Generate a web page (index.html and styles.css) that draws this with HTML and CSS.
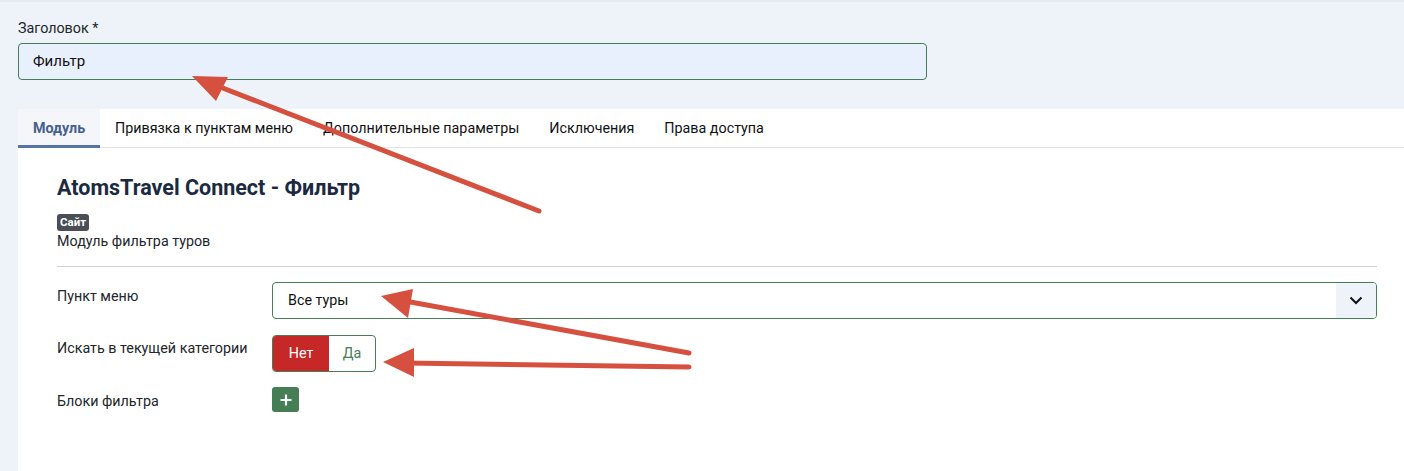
FILE: index.html
```html
<!DOCTYPE html>
<html lang="ru">
<head>
<meta charset="UTF-8">
<meta name="viewport" content="width=device-width, initial-scale=1.0">
<title>Модуль: Фильтр</title>
<link rel="stylesheet" href="styles.css">
</head>
<body>

<div class="page">
  <div class="title-field">
    <label for="title">Заголовок *</label>
    <div class="title-input" id="title">Фильтр</div>
  </div>

  <div class="card">
    <ul class="tabs">
      <li class="tab active">Модуль</li>
      <li class="tab">Привязка к пунктам меню</li>
      <li class="tab">Дополнительные параметры</li>
      <li class="tab">Исключения</li>
      <li class="tab">Права доступа</li>
    </ul>

    <div class="tab-body">
      <h2 class="module-title">AtomsTravel Connect - Фильтр</h2>
      <span class="badge">Сайт</span>
      <p class="module-desc">Модуль фильтра туров</p>
      <hr class="divider">

      <div class="row">
        <div class="row-label">Пункт меню</div>
        <div class="select">
          <span class="select-value">Все туры</span>
          <span class="select-caret">
            <svg width="14" height="9" viewBox="0 0 14 9"><path d="M1.5 1.5 L7 7 L12.5 1.5" fill="none" stroke="#111" stroke-width="2"/></svg>
          </span>
        </div>
      </div>

      <div class="row">
        <div class="row-label">Искать в текущей категории</div>
        <div class="switcher">
          <span class="switch-opt on">Нет</span>
          <span class="switch-opt">Да</span>
        </div>
      </div>

      <div class="row row-center">
        <div class="row-label">Блоки фильтра</div>
        <button class="add-btn" type="button">
          <svg width="12" height="12" viewBox="0 0 12 12"><path d="M6 0.5 V11.5 M0.5 6 H11.5" stroke="#fff" stroke-width="2.2"/></svg>
        </button>
      </div>
    </div>
  </div>
</div>

<!-- annotation arrows drawn over the screenshot -->
<svg class="arrows" width="1404" height="471" viewBox="0 0 1404 471">
  <g fill="#d5503f" stroke="#d5503f" stroke-linecap="round">
    <line x1="539" y1="211" x2="215" y2="85" stroke-width="5"/>
    <polygon points="192,76 228,77 216,101" stroke="none"/>
    <line x1="689" y1="353" x2="405" y2="301" stroke-width="5"/>
    <polygon points="381,296 413,289 408,318" stroke="none"/>
    <line x1="689" y1="367" x2="405" y2="363" stroke-width="5"/>
    <polygon points="383,362 414,348 414,377" stroke="none"/>
  </g>
</svg>

</body>
</html>
```

FILE: styles.css
```css
body {
  margin: 0;
  font-family: Roboto, "Liberation Sans", sans-serif;
  font-size: 14.3px;
  color: #22262a;
  background: #eef3fa;
  border-top: 2px solid #e6ebf2;
  overflow: hidden;
}

.page {
  padding: 16px 0 0 18px;
  height: 469px;
  box-sizing: border-box;
  display: flex;
  flex-direction: column;
}

.title-field label {
  display: block;
  line-height: 20px;
  margin-bottom: 5px;
}

.title-input {
  width: 909px;
  height: 37px;
  box-sizing: border-box;
  border: 1px solid #457d54;
  border-radius: 4px;
  background: #e8f0fd;
  padding: 0 14px;
  line-height: 35px;
  font-size: 15px;
  color: #111;
}

.card {
  margin-top: 29px;
  background: #fff;
  flex: 1;
}

.tabs {
  list-style: none;
  margin: 0;
  padding: 0;
  display: flex;
  border-bottom: 1px solid #dfe5ee;
}

.tab {
  padding: 0 15px;
  height: 38px;
  line-height: 38px;
  color: #111;
  box-sizing: border-box;
}

.tab.active {
  background: #f4f6f9;
  color: #465f8e;
  font-weight: bold;
  border-bottom: 3px solid #5874a6;
  height: 39px;
  margin-bottom: -1px;
}

.tab-body {
  padding: 28px 27px 0 39px;
}

.module-title {
  margin: 0 0 13px;
  font-size: 21.5px;
  line-height: 24px;
  font-weight: bold;
  color: #1b2a40;
}

.badge {
  display: inline-block;
  background: #4a4e55;
  color: #fff;
  font-size: 11.5px;
  font-weight: bold;
  line-height: 17px;
  padding: 0 3px;
  border-radius: 3px;
}

.module-desc {
  margin: 0;
  line-height: 20px;
}

.divider {
  border: 0;
  border-top: 1px solid #cfd1d4;
  margin: 15px 0 15px;
}

.row {
  display: flex;
  align-items: flex-start;
  margin-bottom: 15px;
}

.row-label {
  width: 215px;
  flex-shrink: 0;
  padding-top: 4px;
  line-height: 20px;
}

.row-center {
  align-items: center;
}

.row-center .row-label {
  padding-top: 2px;
}

.select {
  flex: 1;
  height: 37px;
  box-sizing: border-box;
  border: 1px solid #457d54;
  border-radius: 4px;
  display: flex;
  overflow: hidden;
}

.select-value {
  flex: 1;
  padding-left: 15px;
  line-height: 35px;
  color: #111;
}

.select-caret {
  width: 40px;
  background: #eef3fa;
  display: flex;
  align-items: center;
  justify-content: center;
}

.switcher {
  display: flex;
  height: 37px;
  margin-top: 1px;
  border: 1px solid #457d54;
  border-radius: 4px;
  overflow: hidden;
  box-sizing: border-box;
}

.switch-opt {
  width: 46px;
  text-align: center;
  line-height: 35px;
  color: #457d54;
}

.switch-opt.on {
  width: 56px;
  background: #c52827;
  color: #fff;
}

.add-btn {
  width: 27px;
  height: 25px;
  border: 0;
  border-radius: 3px;
  background: #457d54;
  display: flex;
  align-items: center;
  justify-content: center;
  padding: 0;
}

.arrows {
  position: absolute;
  top: 0;
  left: 0;
  pointer-events: none;
}
```
